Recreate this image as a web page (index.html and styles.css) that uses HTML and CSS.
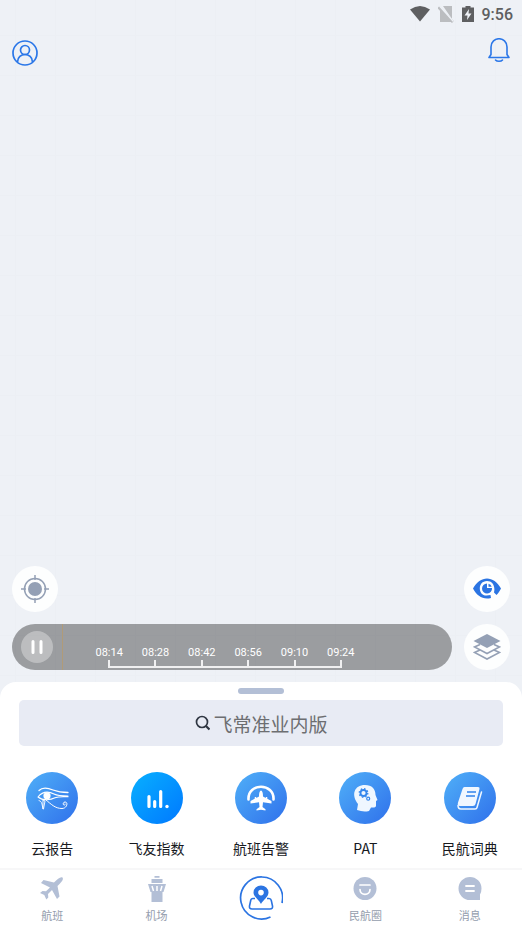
FILE: index.html
```html
<!DOCTYPE html>
<html lang="zh-CN">
<head>
<meta charset="utf-8">
<meta name="viewport" content="width=device-width, initial-scale=1">
<title>飞常准业内版</title>
<link rel="stylesheet" href="styles.css">
</head>
<body>
<div class="status">
  <svg width="20" height="16" viewBox="0 0 20 16"><path d="M0 3.500Q10-3.500 20 3.500L10 15.500z" fill="#5e5f61"/></svg>
  <svg width="16" height="18" viewBox="0 0 16 18"><path d="M5 1h9v13zM2 5l12 12H2z" fill="#bbbdc0"/><path d="M.5 2l14.500 15" stroke="#bbbdc0" stroke-width="3"/><path d="M1.500 1l14 15.500" stroke="#eef1f6" stroke-width="1.300"/></svg>
  <svg width="12" height="18" viewBox="0 0 12 18"><path d="M3.500 1h5v1.500H12V17H0V2.500h3.500z" fill="#5e5f61"/><path d="M7 4L2.500 10.500h3L5 15l4.500-6.500h-3z" fill="#eef1f6"/></svg>
  <time>9:56</time>
</div>
<header class="top">
  <button class="plain" aria-label="个人中心"><svg width="26" height="26" viewBox="0 0 26 26" fill="none" stroke="#2b77e8" stroke-width="1.700"><circle cx="13" cy="13" r="12"/><circle cx="13" cy="10" r="4.500"/><path d="M5.500 22c0-10 15-10 15 0"/></svg></button>
  <button class="plain bell" aria-label="通知"><svg width="22" height="26" viewBox="0 0 22 26" fill="none" stroke="#2b77e8" stroke-width="1.600" stroke-linecap="round" stroke-linejoin="round"><path d="M1 19.500h20l-2-3V9c0-11-16-11-16 0v7.500z"/><path d="M7.500 22c1.500 1.700 5.500 1.700 7 0"/></svg></button>
</header>
<main class="map">
  <div class="row">
    <button class="round" aria-label="定位"><svg width="28" height="28" viewBox="0 0 28 28"><circle cx="14" cy="14" r="10.500" fill="none" stroke="#94a0b5" stroke-width="1.500"/><circle cx="14" cy="14" r="7" fill="#94a0b5"/><path d="M14 0v5M14 23v5M0 14h5M23 14h5" stroke="#94a0b5" stroke-width="1.500"/></svg></button>
    <button class="round" aria-label="显示"><svg width="28" height="22" viewBox="0 0 28 22"><path d="M0 10.500C7-3 21-3 28 10.500c-1.500 3-2.800 4.800-4.500 6.500L21 14.500C22.500 8 19.500 3 14 3c-9.500 0-9.500 14.500-.5 14.500l4-.5.500 3C10 22 4 18 0 10.500z" fill="#2b74e2"/><path d="M14 5.500V10h5a5 5 0 1 1-5-4.500z" fill="#2b74e2"/><path d="M15.500 5.800a5 5 0 0 1 3.200 3h-3.200z" fill="#2b74e2"/></svg></button>
  </div>
  <div class="row">
    <div class="player">
      <button class="pause" aria-label="暂停"><svg width="12" height="14" viewBox="0 0 12 14"><path d="M2 1.500v11M10 1.500v11" stroke="#fff" stroke-width="3" stroke-linecap="round"/></svg></button>
      <span class="cursor"></span>
      <div class="timeline">
        <div class="times"><span>08:14</span><span>08:28</span><span>08:42</span><span>08:56</span><span>09:10</span><span>09:24</span></div>
        <div class="rail"><i></i><i></i><i></i><i></i><i></i></div>
      </div>
    </div>
    <button class="round" aria-label="图层"><svg width="28" height="26" viewBox="0 0 28 26"><path d="M14 0l13.500 7L14 14 .5 7z" fill="#94a0b5"/><g fill="none" stroke="#94a0b5" stroke-width="1.600"><path d="M7 10.500L1.500 13 14 19.500 26.500 13 21 10.500"/><path d="M7 16L1.500 18.500 14 25l12.500-6.500L21 16"/></g></svg></button>
  </div>
</main>
<section class="sheet">
  <span class="handle"></span>
  <button class="search"><svg width="16" height="16" viewBox="0 0 16 16" fill="none" stroke="#2f3642" stroke-width="1.700"><circle cx="8" cy="7" r="5.500"/><path d="M12 11l3.500 3.500" stroke-width="2.200"/></svg><span>飞常准业内版</span></button>
  <div class="apps">
    <a href="#"><span class="disc"><svg width="52" height="52" viewBox="0 0 52 52" fill="none" stroke="#fff" stroke-linecap="round"><path d="M13 18.500c4-4 9-2.500 14-.5 5 2 9 2.500 15 2.500" stroke-width="1.300"/><path d="M12 25c4-5 10-6 16-3 4 2 7 2 14 2M12 25c5 4 13 3 17 .8 4-1.500 7-1 13-1" stroke-width="1.100"/><circle cx="21" cy="23.800" r="3.600" fill="#fff" stroke="none"/><path d="M17 28v9l-1-5c-.5-2-1.500-3-3-3.500M17 28l2 1-1.500 8" stroke-width=".9"/><path d="M20 28c5 4 9 8.500 16 8.500 5 0 6.500-6.500 3-6.500-2 0-2.500 3-.8 3 .8 0 1.200-.5 1-1" stroke-width="1"/></svg></span>云报告</a>
    <a href="#"><span class="disc bright"><svg width="52" height="52" viewBox="0 0 52 52" fill="none" stroke="#fff" stroke-width="3.200" stroke-linecap="round"><path d="M18 24.500v10M23.700 29.500v5M29.700 19.500v15"/><circle cx="36" cy="34.500" r="1.700" fill="#fff" stroke="none"/></svg></span>飞友指数</a>
    <a href="#"><span class="disc"><svg width="52" height="52" viewBox="0 0 52 52"><path d="M13.500 27.500C12.500 10.500 39.500 10.500 38.500 27.500" fill="none" stroke="#fff" stroke-width="2.600" stroke-linecap="round"/><path d="M26 18.500c1.300 0 2 2.500 2 6l8.500 4.500v2.500L28 30.200 27.500 35l3 2.200v1.300L26 37.800l-4.500.7v-1.300l3-2.200-.5-4.800-8.500 1.300V29l8.500-4.500c0-3.500.7-6 2-6z" fill="#fff"/><path d="M20.500 27v-2M31.500 27v-2" stroke="#fff" stroke-width="1.500"/></svg></span>航班告警</a>
    <a href="#"><span class="disc"><svg width="52" height="52" viewBox="0 0 52 52"><path d="M18 38l1-6c-7-9-4-19 7-19 7 0 10.500 4 10.500 10l2 5-1.500 1v5c-.5 2-3 1.500-5 1.500l-2 3.500c-4 1-8 .5-12-1z" fill="#eff7ff"/><circle cx="24.500" cy="21" r="3" fill="none" stroke="#3587ed" stroke-width="1.800"/><circle cx="24.500" cy="21" r="4.300" fill="none" stroke="#3587ed" stroke-width="1.300" stroke-dasharray="1.500 1.880"/><circle cx="29.200" cy="26.700" r="1.500" fill="none" stroke="#3587ed" stroke-width="1.200"/></svg></span>PAT</a>
    <a href="#"><span class="disc"><svg width="52" height="52" viewBox="0 0 52 52"><path d="M20.500 15h13.500q2 0 1.500 2l-4 15q-.5 2-2.500 2H16q-3 0-2-3.500l4.500-13.500q.6-2 2-2z" fill="#f0f7ff"/><path d="M37.500 20l-4.500 15.500q-.3 1.500-2 1.500H17q-3 0-3-3.500" fill="none" stroke="#f0f7ff" stroke-width="1.500" stroke-linecap="round" stroke-linejoin="round"/><path d="M23 20h9M22 24h9" stroke="#3182ec" stroke-width="1.700"/></svg></span>民航词典</a>
  </div>
  <nav class="tabs">
    <a href="#"><svg width="26" height="26" viewBox="0 0 26 26"><path d="M23.500 1.500c1.500 2-1.500 5-5 8.500l2 10.500-2.500 2.500-5-9-4 4 .3 3.500-2 2-2-4.500-4.300-2L3.500 15l3.500.2L11 11.500l-9-4.500L4.500 4l10.500 2.500c3.500-4 7-6.300 8.500-5z" fill="#b3bfd6"/></svg>航班</a>
    <a href="#"><svg width="26" height="26" viewBox="0 0 26 26" fill="#b3bfd6"><path d="M10.500 0h5v1.800h-5zM7.500 3h11v4h-11zM4 8h18l-2.500 8h-13zM7.500 16h11v10h-11z"/><path d="M8 10l1.500 5M13 10v5M18 10l-1.500 5" stroke="#fff" stroke-width="1.500"/></svg>机场</a>
    <a href="#" class="home" aria-label="地图"><svg width="44" height="44" viewBox="0 0 44 44" fill="none" stroke="#2b74e2"><path d="M31.500 41A21 21 0 1 1 43 27" stroke-width="1.700"/><path d="M16 22.500h-2q-2 0-2.300 2l-1.200 5.500q-.4 3 2.500 3h18q3 0 2.500-3l-1.200-5.500q-.4-2-2.300-2h-2" stroke-width="1.600"/><path d="M22 9.500a7.500 7 0 0 1 7.500 7c0 4.500-5.500 7.500-7.500 11.500-2-4-7.500-7-7.500-11.500a7.500 7 0 0 1 7.500-7zm0 4.300a2.800 2.800 0 1 0 0 5.600 2.800 2.800 0 0 0 0-5.600z" fill="#2b74e2" stroke="none" fill-rule="evenodd"/></svg></a>
    <a href="#"><svg width="26" height="26" viewBox="0 0 26 26"><circle cx="13" cy="12.500" r="11.500" fill="#b3bfd6"/><path d="M8 9h10M8 13.500c0 6.500 10 6.500 10 0" fill="none" stroke="#fff" stroke-width="1.700" stroke-linecap="round"/></svg>民航圈</a>
    <a href="#"><svg width="26" height="26" viewBox="0 0 26 26"><path d="M13 1a11.500 11.500 0 0 1 11.500 11.500q0 3.500-1.500 6v5.500H13A11.500 11.500 0 0 1 13 1z" fill="#b3bfd6"/><path d="M9 10h8M9 15h8" stroke="#fff" stroke-width="1.800" stroke-linecap="round"/></svg>消息</a>
  </nav>
</section>
</body>
</html>
```
FILE: styles.css
```css
* {
  box-sizing: border-box;
}

body {
  margin: 0;
  min-height: 100vh;
  display: flex;
  flex-direction: column;
  font-family: Roboto, "Noto Sans CJK SC", sans-serif;
  background-color: #eef1f6;
  background-image:
    repeating-linear-gradient(90deg, transparent 0 15px, #eceff4 15px 16px, transparent 16px 40px),
    repeating-linear-gradient(180deg, transparent 0 35px, #eceff4 35px 36px, transparent 36px 40px);
}

button {
  border: 0;
  padding: 0;
  font: inherit;
  cursor: pointer;
}

a {
  color: inherit;
  text-decoration: none;
}

svg {
  display: block;
  flex: none;
}

.status {
  display: flex;
  align-items: center;
  justify-content: flex-end;
  gap: 8px;
  height: 28px;
  padding-right: 9px;
  color: #5e5f61;
  font-size: 16px;
  font-weight: 500;
}

.top {
  display: flex;
  justify-content: space-between;
  align-items: flex-start;
  padding: 10px 12px;
}

.plain {
  background: none;
  padding-top: 2px;
}

.bell {
  padding-top: 0;
}

.map {
  flex: 1;
  display: flex;
  flex-direction: column;
  justify-content: flex-end;
  gap: 12px;
  padding: 12px;
}

.row {
  display: flex;
  justify-content: space-between;
  gap: 12px;
}

.round {
  display: grid;
  place-items: center;
  flex: none;
  width: 46px;
  height: 46px;
  border-radius: 50%;
  background: #fdfefe;
}

.player {
  flex: 1;
  display: flex;
  align-items: center;
  height: 46px;
  padding-left: 9px;
  border-radius: 23px;
  background: rgba(0, 0, 0, 0.35);
}

.pause {
  display: grid;
  place-items: center;
  width: 32px;
  height: 32px;
  border-radius: 50%;
  background: rgba(255, 255, 255, 0.33);
}

.cursor {
  align-self: stretch;
  width: 1px;
  margin-left: 9px;
  background: #b09b78;
}

.timeline {
  align-self: flex-end;
  width: 278px;
  margin: 0 0 2px 23px;
  color: #fff;
  font-size: 11px;
  line-height: 14px;
}

.times {
  display: flex;
}

.times span {
  flex: 1;
  text-align: center;
}

.rail {
  display: flex;
  height: 8px;
  margin: 0 22px;
  border: solid #f0f0f1;
  border-width: 0 0 2px 2px;
}

.rail i {
  flex: 1;
  border-right: 2px solid #f0f0f1;
}

.sheet {
  display: flex;
  flex-direction: column;
  padding-top: 6px;
  border-radius: 16px 16px 0 0;
  background: #fff;
}

.handle {
  align-self: center;
  width: 46px;
  height: 6px;
  border-radius: 3px;
  background: #b3bfd6;
}

.search {
  display: flex;
  align-items: center;
  justify-content: center;
  gap: 3px;
  height: 46px;
  margin: 6px 19px 26px;
  border-radius: 5px;
  background: #e8ebf4;
  color: #6d6e71;
  font-size: 19px;
}

.apps,
.tabs {
  display: grid;
  grid-template-columns: repeat(5, 1fr);
}

.apps a {
  display: flex;
  flex-direction: column;
  align-items: center;
  gap: 14px;
  color: #17191e;
  font-family: "Noto Sans CJK SC", sans-serif;
  font-size: 14px;
  line-height: 20px;
}

.disc {
  border-radius: 50%;
  background: linear-gradient(135deg, #50b0f8, #2f70eb);
}

.bright {
  background: linear-gradient(135deg, #08b0ff, #0078ff);
}

.tabs {
  height: 60px;
  margin-top: 10px;
  border-top: 2px solid #f7f7f8;
}

.tabs a {
  display: flex;
  flex-direction: column;
  align-items: center;
  gap: 6px;
  padding-top: 6px;
  color: #949dad;
  font-size: 11px;
  line-height: 18px;
}
```
